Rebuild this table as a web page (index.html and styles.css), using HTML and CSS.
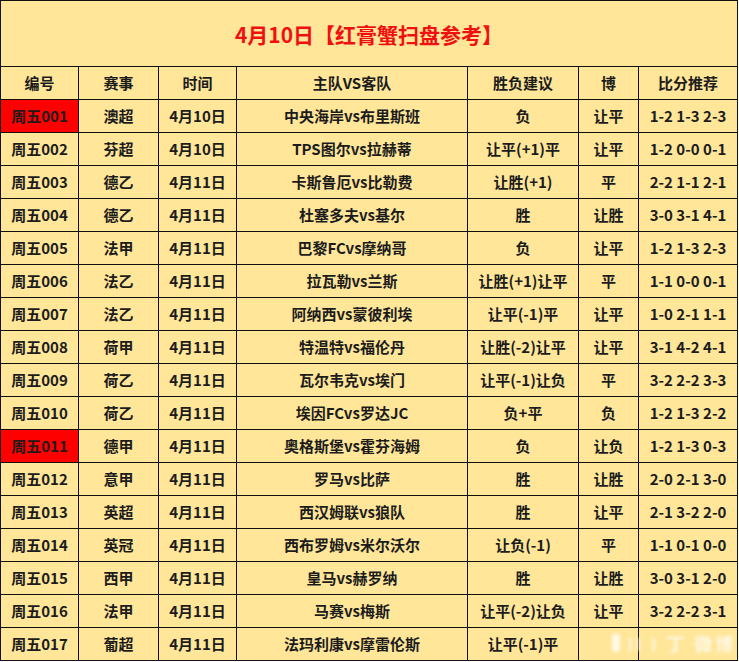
FILE: index.html
```html
<!DOCTYPE html>
<html lang="zh">
<head>
<meta charset="utf-8">
<link rel="stylesheet" href="styles.css">
</head>
<body>
<div class="sheet">
<table class="grid">
<colgroup>
<col class="c1"><col class="c2"><col class="c3"><col class="c4"><col class="c5"><col class="c6"><col class="c7">
</colgroup>
<tr class="title-row"><td colspan="7" class="title">4月10日【红膏蟹扫盘参考】</td></tr>
<tr class="head"><td>编号</td><td>赛事</td><td>时间</td><td>主队VS客队</td><td>胜负建议</td><td>博</td><td>比分推荐</td></tr>
<tr><td class="hot">周五001</td><td>澳超</td><td>4月10日</td><td>中央海岸vs布里斯班</td><td>负</td><td>让平</td><td>1-2 1-3 2-3</td></tr>
<tr><td>周五002</td><td>芬超</td><td>4月10日</td><td>TPS图尔vs拉赫蒂</td><td>让平(+1)平</td><td>让平</td><td>1-2 0-0 0-1</td></tr>
<tr><td>周五003</td><td>德乙</td><td>4月11日</td><td>卡斯鲁厄vs比勒费</td><td>让胜(+1)</td><td>平</td><td>2-2 1-1 2-1</td></tr>
<tr><td>周五004</td><td>德乙</td><td>4月11日</td><td>杜塞多夫vs基尔</td><td>胜</td><td>让胜</td><td>3-0 3-1 4-1</td></tr>
<tr><td>周五005</td><td>法甲</td><td>4月11日</td><td>巴黎FCvs摩纳哥</td><td>负</td><td>让平</td><td>1-2 1-3 2-3</td></tr>
<tr><td>周五006</td><td>法乙</td><td>4月11日</td><td>拉瓦勒vs兰斯</td><td>让胜(+1)让平</td><td>平</td><td>1-1 0-0 0-1</td></tr>
<tr><td>周五007</td><td>法乙</td><td>4月11日</td><td>阿纳西vs蒙彼利埃</td><td>让平(-1)平</td><td>让平</td><td>1-0 2-1 1-1</td></tr>
<tr><td>周五008</td><td>荷甲</td><td>4月11日</td><td>特温特vs福伦丹</td><td>让胜(-2)让平</td><td>让平</td><td>3-1 4-2 4-1</td></tr>
<tr><td>周五009</td><td>荷乙</td><td>4月11日</td><td>瓦尔韦克vs埃门</td><td>让平(-1)让负</td><td>平</td><td>3-2 2-2 3-3</td></tr>
<tr><td>周五010</td><td>荷乙</td><td>4月11日</td><td>埃因FCvs罗达JC</td><td>负+平</td><td>负</td><td>1-2 1-3 2-2</td></tr>
<tr><td class="hot">周五011</td><td>德甲</td><td>4月11日</td><td>奥格斯堡vs霍芬海姆</td><td>负</td><td>让负</td><td>1-2 1-3 0-3</td></tr>
<tr><td>周五012</td><td>意甲</td><td>4月11日</td><td>罗马vs比萨</td><td>胜</td><td>让胜</td><td>2-0 2-1 3-0</td></tr>
<tr><td>周五013</td><td>英超</td><td>4月11日</td><td>西汉姆联vs狼队</td><td>胜</td><td>让平</td><td>2-1 3-2 2-0</td></tr>
<tr><td>周五014</td><td>英冠</td><td>4月11日</td><td>西布罗姆vs米尔沃尔</td><td>让负(-1)</td><td>平</td><td>1-1 0-1 0-0</td></tr>
<tr><td>周五015</td><td>西甲</td><td>4月11日</td><td>皇马vs赫罗纳</td><td>胜</td><td>让胜</td><td>3-0 3-1 2-0</td></tr>
<tr><td>周五016</td><td>法甲</td><td>4月11日</td><td>马赛vs梅斯</td><td>让平(-2)让负</td><td>让平</td><td>3-2 2-2 3-1</td></tr>
<tr><td>周五017</td><td>葡超</td><td>4月11日</td><td>法玛利康vs摩雷伦斯</td><td>让平(-1)平</td><td></td><td></td></tr>
</table>
<div class="watermark"><span class="wm-logo"></span><span class="wm-text">ǀǀ ǀ 丁 微博</span></div>
</div>
</body>
</html>
```

FILE: styles.css
```css
html, body {
  margin: 0;
  padding: 0;
  background: #ffffff;
}
.sheet {
  position: relative;
  width: 739px;
  height: 662px;
}
.grid {
  border-collapse: collapse;
  table-layout: fixed;
  width: 738px;
  background: #ffe699;
  font-family: "Noto Sans CJK SC", "Noto Sans", sans-serif;
  font-weight: 700;
  font-size: 15px;
  color: #1c1c1c;
}
.c1 { width: 78px; }
.c2 { width: 80px; }
.c3 { width: 78px; }
.c4 { width: 231px; }
.c5 { width: 111px; }
.c6 { width: 60px; }
.c7 { width: 99px; }
.grid td {
  border: 1px solid #111111;
  height: 32px;
  padding: 0;
  text-align: center;
  vertical-align: middle;
  line-height: 20px;
  white-space: nowrap;
  overflow: hidden;
}
.grid .title-row td {
  height: 65px;
}
.title {
  color: #f01010;
  font-size: 21px;
  letter-spacing: 0;
}
.hot {
  background: #fe0000;
}
.watermark {
  position: absolute;
  left: 612px;
  top: 633px;
  display: flex;
  align-items: center;
  gap: 8px;
  filter: blur(1.4px);
  opacity: 0.75;
}
.wm-logo {
  width: 8px;
  height: 18px;
  border-radius: 2px 2px 6px 6px;
  background: #ffffff;
}
.wm-text {
  font-family: "Noto Sans CJK SC", sans-serif;
  font-size: 18px;
  font-weight: 700;
  color: #ffffff;
  letter-spacing: 3px;
  line-height: 20px;
}
```
